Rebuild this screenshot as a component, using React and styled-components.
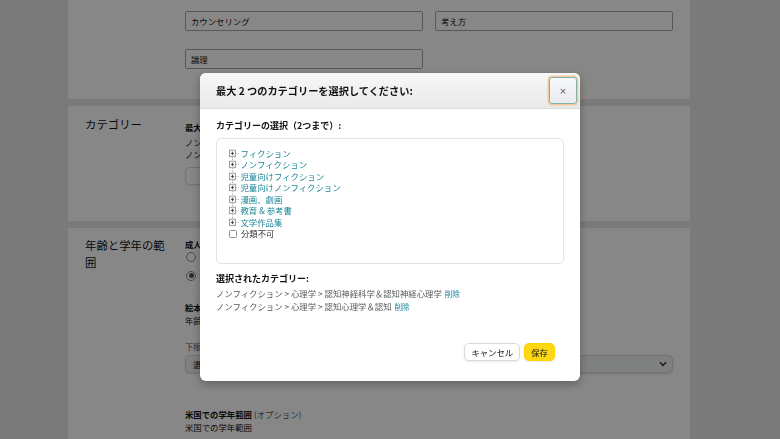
import React from "react";
import styled, { createGlobalStyle } from "styled-components";

const GlobalStyle = createGlobalStyle`
  html, body { margin: 0; padding: 0; }
  body {
    background: #e6e7e6;
    font-family: "Noto Sans CJK JP", "Noto Sans", sans-serif;
    color: #0f1111;
    overflow: hidden;
  }
`;

const Page = styled.div`
  width: 622px;
  margin-left: 68px;
  display: flex;
  flex-direction: column;
  gap: 7px;
`;

const Panel = styled.section`
  background: #fff;
  display: grid;
  grid-template-columns: 100px 1fr;
  padding: ${(p) => p.$pad};
`;

const Heading = styled.h2`
  margin: 0;
  width: 86px;
  font-size: 11.4px;
  line-height: 17px;
  font-weight: 400;
  color: #111;
`;

const Content = styled.div`
  display: flex;
  flex-direction: column;
  padding-top: ${(p) => p.$top || 0}px;
`;

const FieldGrid = styled.div`
  display: grid;
  grid-template-columns: 238px 238px;
  column-gap: 12px;
  row-gap: 18px;
`;

const Field = styled.div`
  height: 20px;
  box-sizing: border-box;
  border: 1px solid #a6a6a6;
  border-radius: 2px;
  padding: 0 5px;
  font-size: 8.4px;
  line-height: 18px;
  color: #0f1111;
`;

const Strong = styled.div`
  font-size: 8.4px;
  font-weight: 700;
  line-height: 12px;
  margin-bottom: ${(p) => p.$mb || 0}px;
  margin-top: ${(p) => p.$mt || 0}px;
`;

const Muted = styled.span`
  font-weight: 400;
  color: #565959;
`;

const Text = styled.div`
  font-size: 8.4px;
  line-height: 12px;
  color: ${(p) => p.$color || "#0f1111"};
  margin-top: ${(p) => p.$mt || 0}px;
`;

const GhostButton = styled.div`
  margin-top: 7px;
  width: 96px;
  height: 18px;
  box-sizing: border-box;
  border: 1px solid #d5d9d9;
  border-radius: 5px;
  font-size: 8.4px;
  line-height: 16px;
  text-align: center;
  box-shadow: 0 1px 2px rgba(213, 217, 217, 0.5);
`;

const RadioList = styled.div`
  display: flex;
  flex-direction: column;
  margin-top: -3px;
`;

const RadioRow = styled.label`
  display: flex;
  align-items: center;
  gap: 6px;
  height: 19px;
  font-size: 8.4px;
`;

const RadioDot = styled.span`
  width: 10px;
  height: 10px;
  box-sizing: border-box;
  border-radius: 50%;
  border: 1px solid #888c8c;
  margin-left: 1px;
  display: flex;
  align-items: center;
  justify-content: center;
  &::after {
    content: "";
    width: 5px;
    height: 5px;
    border-radius: 50%;
    background: ${(p) => (p.$checked ? "#555" : "transparent")};
  }
`;

const Select = styled.div`
  margin-top: 3px;
  height: 18px;
  box-sizing: border-box;
  border: 1px solid #d5d9d9;
  border-radius: 5px;
  background: #f0f2f2;
  box-shadow: 0 1px 2px rgba(15, 17, 17, 0.15);
  display: flex;
  align-items: center;
  justify-content: space-between;
  padding: 0 5px 0 7px;
  font-size: 8.4px;
`;

/* ---------- modal ---------- */

const Overlay = styled.div`
  position: fixed;
  inset: 0;
  background: rgba(0, 0, 0, 0.47);
  display: flex;
  justify-content: center;
  align-items: flex-start;
  padding-top: 73px;
`;

const Modal = styled.div`
  width: 380px;
  height: 308px;
  background: #fff;
  border-radius: 6px;
  box-shadow: 0 3px 10px rgba(0, 0, 0, 0.3);
  display: flex;
  flex-direction: column;
  overflow: hidden;
`;

const ModalHeader = styled.div`
  height: 36px;
  box-sizing: border-box;
  display: flex;
  align-items: center;
  justify-content: space-between;
  padding: 0 3px 0 16px;
  background: linear-gradient(#f7f7f7, #e9e9e9);
  border-bottom: 1px solid #dcdcdc;
`;

const ModalTitle = styled.h1`
  margin: 0;
  font-size: 10.2px;
  font-weight: 700;
  color: #111;
`;

const CloseButton = styled.button`
  width: 28px;
  height: 27px;
  box-sizing: border-box;
  border: 1px solid #7fb0ae;
  border-radius: 3px;
  box-shadow: 0 0 0 1.5px #f4c99b;
  background: linear-gradient(#f7f8fa, #e9ebee);
  font-family: "DejaVu Sans", sans-serif;
  font-size: 9px;
  color: #555;
  padding: 0;
  display: flex;
  align-items: center;
  justify-content: center;
`;

const ModalBody = styled.div`
  flex: 1;
  display: flex;
  flex-direction: column;
  padding: 10px 16px 0;
`;

const SectionLabel = styled.div`
  font-size: 9px;
  font-weight: 700;
  line-height: 13px;
  color: #111;
  margin-top: ${(p) => p.$mt || 0}px;
`;

const TreeBox = styled.div`
  margin-top: 6px;
  height: 126px;
  box-sizing: border-box;
  border: 1px solid #e3e3e3;
  border-radius: 5px;
  padding: 9px 12px;
`;

const TreeRow = styled.div`
  display: flex;
  align-items: center;
  height: 11.45px;
  font-size: 8.4px;
  line-height: 11.45px;
`;

const TreeLink = styled.a`
  color: #1a8599;
  text-decoration: none;
  margin-left: 0.5px;
`;

const CheckBox = styled.span`
  width: 8px;
  height: 8px;
  box-sizing: border-box;
  border: 1px solid #8d9090;
  border-radius: 1.5px;
  margin: 0 4px 0 0;
`;

const Plain = styled.span`
  color: #333;
`;

const SelectedLine = styled.div`
  font-size: 8.4px;
  line-height: 12px;
  color: #565959;
  margin-top: ${(p) => p.$mt || 0}px;
`;

const RemoveLink = styled.a`
  color: #1a8599;
  font-size: 7.6px;
  margin-left: 3px;
`;

const Footer = styled.div`
  margin-top: auto;
  display: flex;
  justify-content: flex-end;
  gap: 4px;
  padding: 0 9px 20px 0;
`;

const Button = styled.button`
  height: 18px;
  box-sizing: border-box;
  padding: 0 6px;
  white-space: nowrap;
  border-radius: 5px;
  border: 1px solid ${(p) => (p.$primary ? "#fcd200" : "#d5d9d9")};
  background: ${(p) => (p.$primary ? "#ffd814" : "#fff")};
  box-shadow: 0 1px 2px rgba(213, 217, 217, 0.5);
  font-family: "Noto Sans CJK JP", sans-serif;
  font-size: 8.4px;
  line-height: 16px;
  color: #0f1111;
`;

function TreeIcon({ first, last }) {
  return (
    <svg width="11" height="11.45" viewBox="0 0 11 11.45">
      {!first && <line x1="3.5" y1="0" x2="3.5" y2="2.2" stroke="#aaa" strokeWidth="1" strokeDasharray="1 1" />}
      {!last && <line x1="3.5" y1="9.2" x2="3.5" y2="11.45" stroke="#aaa" strokeWidth="1" strokeDasharray="1 1" />}
      <rect x="0.5" y="2.2" width="6" height="6.5" fill="#f4f4f4" stroke="#999" strokeWidth="0.9" />
      <line x1="2" y1="5.45" x2="5" y2="5.45" stroke="#444" strokeWidth="0.9" />
      <line x1="3.5" y1="3.8" x2="3.5" y2="7.1" stroke="#444" strokeWidth="0.9" />
      <line x1="7" y1="5.45" x2="11" y2="5.45" stroke="#aaa" strokeWidth="0.8" strokeDasharray="1 1" />
    </svg>
  );
}

const categories = [
  "フィクション",
  "ノンフィクション",
  "児童向けフィクション",
  "児童向けノンフィクション",
  "漫画、劇画",
  "教育 & 参考書",
  "文学作品集",
];

export default function App() {
  return (
    <>
      <GlobalStyle />
      <Page>
        <Panel $pad="11px 17px 30px">
          <div />
          <FieldGrid>
            <Field>カウンセリング</Field>
            <Field>考え方</Field>
            <Field>論理</Field>
          </FieldGrid>
        </Panel>

        <Panel $pad="10px 17px 36px">
          <Heading>カテゴリー</Heading>
          <Content $top={5}>
            <Strong $mb={3}>最大 2 つのカテゴリーを選択してください</Strong>
            <Text>ノンフィクション &gt; 心理学 &gt; 認知神経科学＆認知神経心理学</Text>
            <Text>ノンフィクション &gt; 心理学 &gt; 認知心理学＆認知</Text>
            <GhostButton>カテゴリーを選択</GhostButton>
          </Content>
        </Panel>

        <Panel $pad="9px 17px 40px">
          <Heading>年齢と学年の範囲</Heading>
          <Content $top={1}>
            <Strong>成人向けコンテンツ</Strong>
            <RadioList>
              <RadioRow>
                <RadioDot />
                はい
              </RadioRow>
              <RadioRow>
                <RadioDot $checked />
                いいえ
              </RadioRow>
            </RadioList>
            <Strong $mt={16}>絵本の読者の年齢範囲 <Muted>(オプション)</Muted></Strong>
            <Text $mt={1}>年齢範囲</Text>
            <Text $mt={14} $color="#565959">下限</Text>
            <Select>
              <span>選択</span>
              <svg width="8" height="6" viewBox="0 0 8 6">
                <path d="M1 1.2 L4 4.4 L7 1.2" fill="none" stroke="#333" strokeWidth="1.5" />
              </svg>
            </Select>
            <Strong $mt={35}>米国での学年範囲 <Muted>(オプション)</Muted></Strong>
            <Text $mt={1}>米国での学年範囲</Text>
          </Content>
        </Panel>
      </Page>

      <Overlay>
        <Modal>
          <ModalHeader>
            <ModalTitle>最大 2 つのカテゴリーを選択してください:</ModalTitle>
            <CloseButton>×</CloseButton>
          </ModalHeader>
          <ModalBody>
            <SectionLabel>カテゴリーの選択（2つまで）:</SectionLabel>
            <TreeBox>
              {categories.map((c, i) => (
                <TreeRow key={c}>
                  <TreeIcon first={i === 0} last={i === categories.length - 1} />
                  <TreeLink>{c}</TreeLink>
                </TreeRow>
              ))}
              <TreeRow>
                <CheckBox />
                <Plain>分類不可</Plain>
              </TreeRow>
            </TreeBox>
            <SectionLabel $mt={8}>選択されたカテゴリー:</SectionLabel>
            <SelectedLine $mt={2}>
              ノンフィクション &gt; 心理学 &gt; 認知神経科学＆認知神経心理学
              <RemoveLink>削除</RemoveLink>
            </SelectedLine>
            <SelectedLine>
              ノンフィクション &gt; 心理学 &gt; 認知心理学＆認知
              <RemoveLink>削除</RemoveLink>
            </SelectedLine>
            <Footer>
              <Button>キャンセル</Button>
              <Button $primary>保存</Button>
            </Footer>
          </ModalBody>
        </Modal>
      </Overlay>
    </>
  );
}
